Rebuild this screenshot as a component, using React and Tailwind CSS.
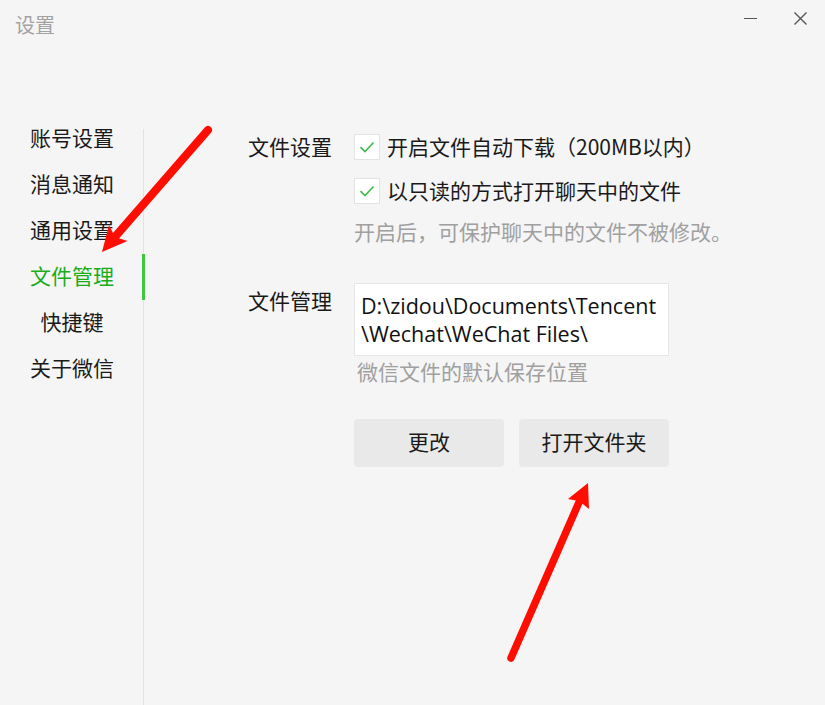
import React from 'react';

const menu = ['账号设置', '消息通知', '通用设置', '文件管理', '快捷键', '关于微信'];

const Check = () => (
  <span className="w-[26px] h-[26px] bg-white border border-[#e3e3e3] flex items-center justify-center shrink-0">
    <svg width="16" height="12" viewBox="0 0 16 12" fill="none">
      <path d="M1.5 6.2 L6 10.5 L14.5 1.5" stroke="#3dbb4a" strokeWidth="1.6" />
    </svg>
  </span>
);

const Arrows = () => (
  <svg className="absolute inset-0 pointer-events-none" width="825" height="705" viewBox="0 0 825 705">
    <line x1="208" y1="130" x2="114" y2="238" stroke="#ff0d00" strokeWidth="8" strokeLinecap="round" />
    <polygon points="102,252 109,225 115,237 127.5,241" fill="#ff0d00" />
    <line x1="511" y1="658" x2="580" y2="500" stroke="#ff0d00" strokeWidth="7.5" strokeLinecap="round" />
    <polygon points="588,483 589,509 579,501 568,499" fill="#ff0d00" />
  </svg>
);

export default function App() {
  return (
    <div
      className="relative w-[825px] h-[705px] bg-[#f5f5f5] overflow-hidden text-[#1a1a1a]"
      style={{ fontFamily: '"Noto Sans CJK SC", "Noto Sans", sans-serif' }}
    >
      {/* title bar */}
      <div className="flex items-start justify-between h-[129px]">
        <div className="pl-[15px] pt-[12px] text-[20px] leading-[26px] text-[#a3a3a3]">设置</div>
        <div className="flex items-start pt-[12px] pr-[18px] gap-[37px]">
          <div className="w-[13px] h-[13px] flex items-center">
            <div className="w-[13px] h-[1.5px] bg-[#555]" />
          </div>
          <svg width="13" height="13" viewBox="0 0 13 13">
            <path d="M0.5 0.5 L12.5 12.5 M12.5 0.5 L0.5 12.5" stroke="#555" strokeWidth="1.4" />
          </svg>
        </div>
      </div>

      <div className="flex">
        {/* sidebar */}
        <div className="w-[144px] h-[576px] border-r border-[#e2e2e2]">
          <div className="-mt-[13px]">
            {menu.map((m, i) => (
              <div key={m} className="relative h-[46px] flex items-center pl-[30px]">
                <span
                  className={`w-[84px] text-center text-[21px] leading-[28px] -mt-[4px] ${
                    i === 3 ? 'text-[#1aad19]' : 'text-[#1a1a1a]'
                  }`}
                >
                  {m}
                </span>
                {i === 3 && <div className="absolute right-[-2px] top-0 w-[3px] h-[46px] bg-[#3fc83f]" />}
              </div>
            ))}
          </div>
        </div>

        {/* content */}
        <div className="pl-[104px] -mt-[4px] text-[21px] leading-[28px]">
          <div className="flex">
            <div className="w-[106px] h-[44px] flex items-center -mt-[1px]">文件设置</div>
            <div className="flex flex-col">
              <div className="h-[44px] flex items-center gap-[7px]">
                <Check />
                <span className="-mt-[2px]">开启文件自动下载（200MB以内）</span>
              </div>
              <div className="h-[44px] flex items-center gap-[7px]">
                <Check />
                <span className="-mt-[2px]">以只读的方式打开聊天中的文件</span>
              </div>
              <div className="mt-[4px] text-[#a0a0a0]">开启后，可保护聊天中的文件不被修改。</div>
            </div>
          </div>

          <div className="flex mt-[38px]">
            <div className="w-[106px] pt-[3px]">文件管理</div>
            <div className="flex flex-col">
              <div
                className="w-[315px] h-[73px] bg-white border border-[#e6e6e6] pl-[6px] pt-[8px] text-[21.5px] leading-[28px] text-[#111]"
                style={{ fontFamily: '"Open Sans", "Noto Sans CJK SC", sans-serif' }}
              >
                D:\zidou\Documents\Tencent
                <br />
                \Wechat\WeChat Files\
              </div>
              <div className="mt-[1px] pl-[3px] text-[#a0a0a0]">微信文件的默认保存位置</div>
              <div className="flex gap-[15px] mt-[34px]">
                <button className="w-[150px] h-[48px] pb-[4px] rounded-[4px] bg-[#e9e9e9] text-[21px] text-[#1a1a1a]">
                  更改
                </button>
                <button className="w-[150px] h-[48px] pb-[4px] rounded-[4px] bg-[#e9e9e9] text-[21px] text-[#1a1a1a]">
                  打开文件夹
                </button>
              </div>
            </div>
          </div>
        </div>
      </div>

      <Arrows />
    </div>
  );
}
